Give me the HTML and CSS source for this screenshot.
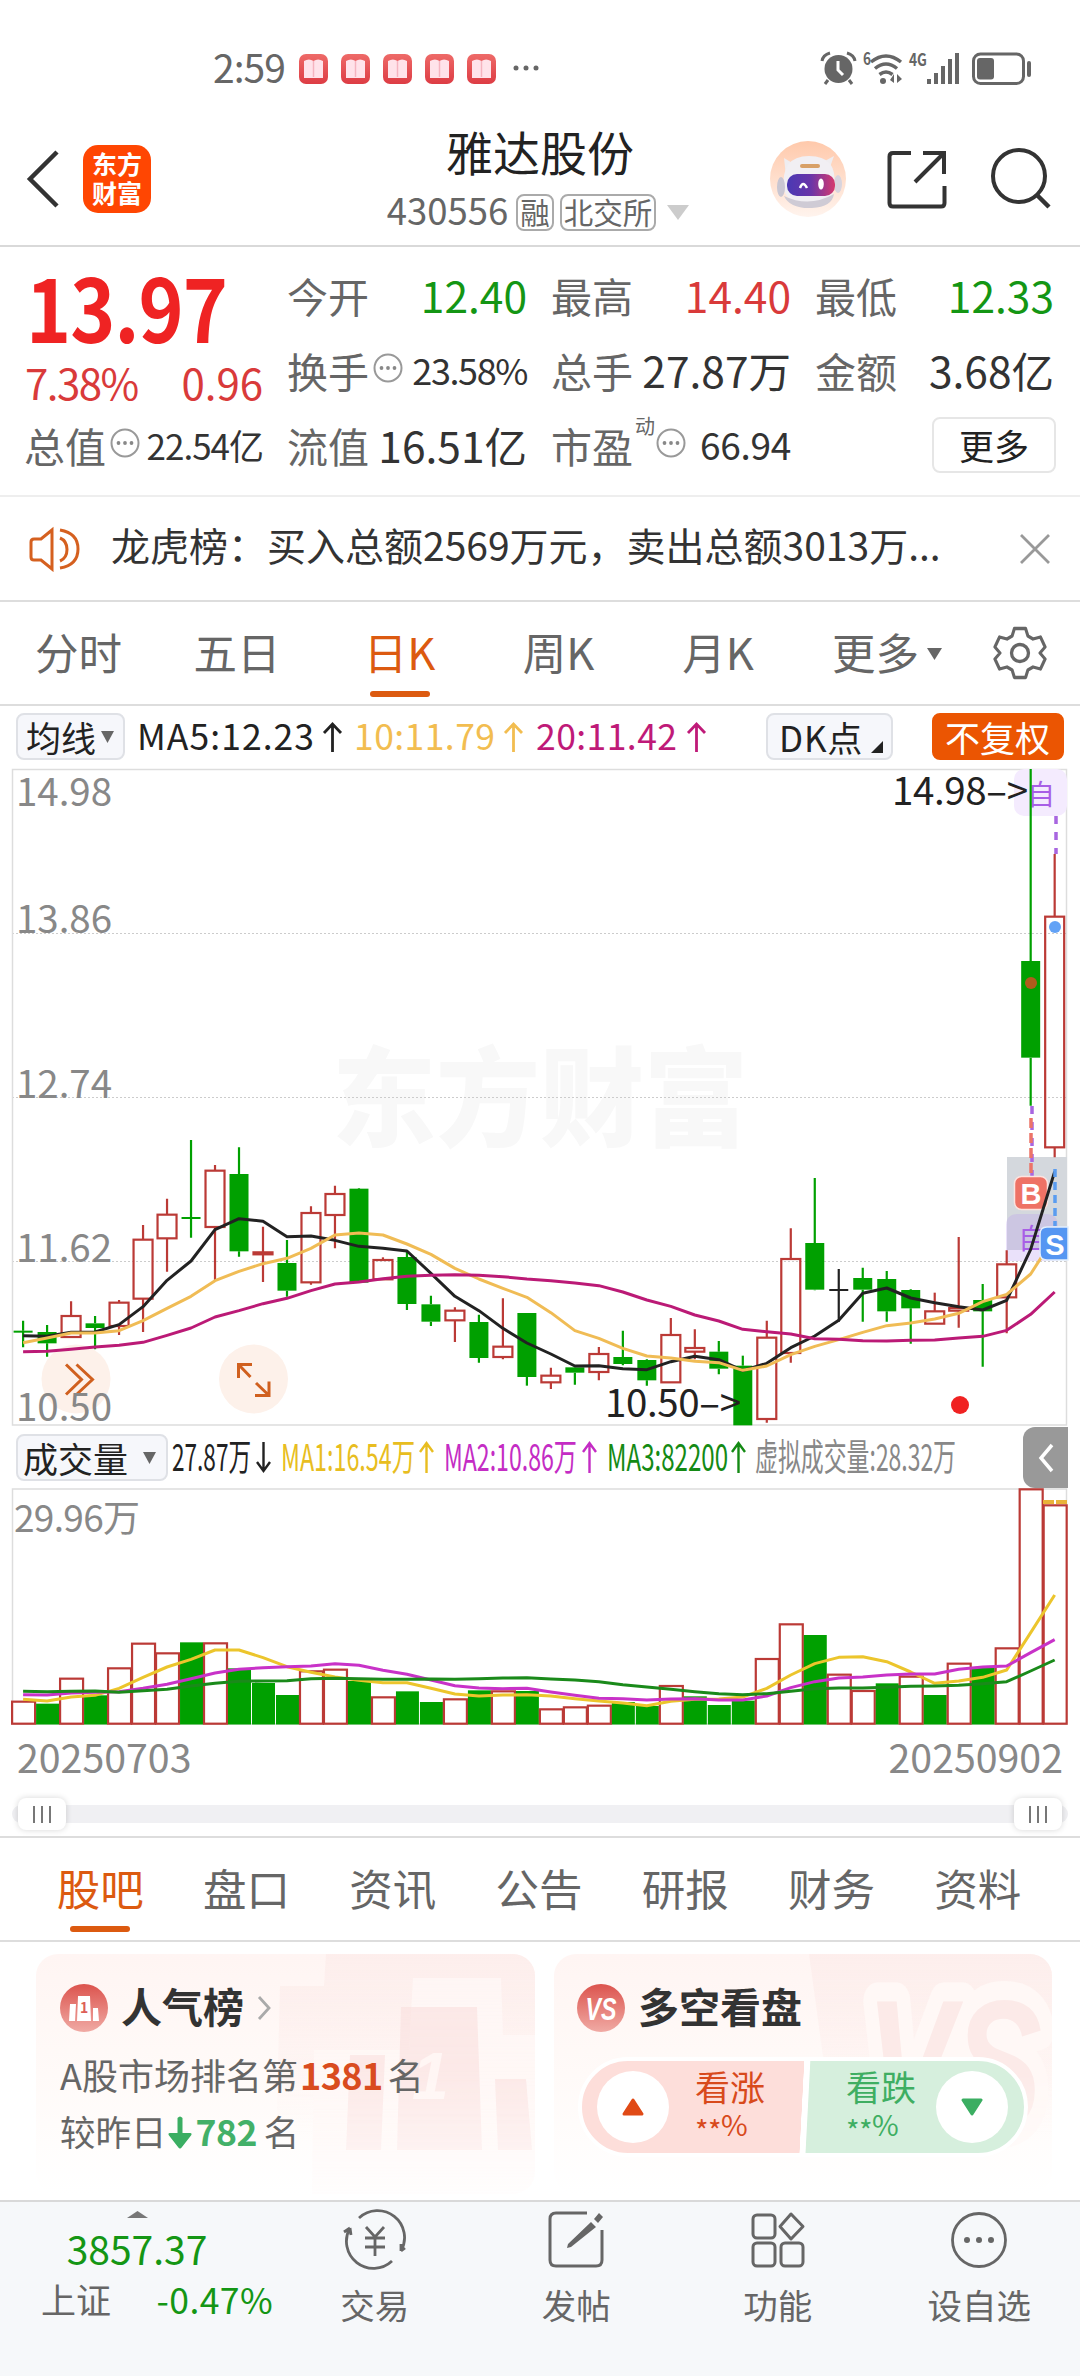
FILE: index.html
```html
<!DOCTYPE html>
<html lang="zh-CN">
<head>
<meta charset="utf-8">
<title>雅达股份 430556</title>
<link rel="stylesheet" href="styles.css">
</head>
<body>
<svg class="defs" width="0" height="0" aria-hidden="true">
  <defs>
    <linearGradient id="book" x1="0" y1="0" x2="0" y2="1"><stop offset="0" stop-color="#ee6a68"/><stop offset="1" stop-color="#dd3c44"/></linearGradient>
    <linearGradient id="halo" x1="0" y1="0" x2="0" y2="1"><stop offset="0" stop-color="#ffc9ab"/><stop offset="1" stop-color="#fff4ee"/></linearGradient>
    <linearGradient id="visor" x1="0" y1="0" x2="1" y2="0"><stop offset="0" stop-color="#4a39b4"/><stop offset=".5" stop-color="#6a35a8"/><stop offset="1" stop-color="#d63a6e"/></linearGradient>
    <linearGradient id="badge" x1="0" y1="0" x2="0" y2="1"><stop offset="0" stop-color="#dc544e"/><stop offset="1" stop-color="#f0aaa4"/></linearGradient>
    <linearGradient id="veil" x1="0" y1="0" x2="0" y2="1"><stop offset="0" stop-color="#fdeeec"/><stop offset=".75" stop-color="#fdeeec" stop-opacity="0"/></linearGradient>
    <symbol id="note" viewBox="0 0 29 30"><rect width="29" height="30" rx="7" fill="url(#book)"/><path d="M5 7q5-3 9.500 0q4.500-3 9.500 0V24h-19z" fill="#ffe3ea"/><path d="M14.500 7v16" stroke="#f5b4c0" stroke-width="1.500"/></symbol>
    <symbol id="more" viewBox="0 0 30 30"><circle cx="15" cy="15" r="13.500" fill="none" stroke="#999" stroke-width="2"/><g fill="#888"><circle cx="8.500" cy="15" r="1.900"/><circle cx="15" cy="15" r="1.900"/><circle cx="21.500" cy="15" r="1.900"/></g></symbol>
  </defs>
</svg>

<div class="status">
  <span class="clock">2:59</span>
  <div class="notes">
    <svg><use href="#note"/></svg><svg><use href="#note"/></svg><svg><use href="#note"/></svg><svg><use href="#note"/></svg><svg><use href="#note"/></svg>
  </div>
  <svg class="dots" viewBox="0 0 26 6"><g fill="#666"><circle cx="3" cy="3" r="2.500"/><circle cx="13" cy="3" r="2.500"/><circle cx="23" cy="3" r="2.500"/></g></svg>
  <svg class="signals" viewBox="820 50 214 38">
    <g fill="#666">
      <circle cx="838.500" cy="69" r="14"/>
      <path d="M822 61q1-6 8-8M855 61q-1-6-8-8M828 80l-3 4M849 80l3 4" fill="none" stroke="#666" stroke-width="3"/>
      <path d="M838 61v9l5 5" fill="none" stroke="#fff" stroke-width="3"/>
      <text class="tiny" x="863" y="65" textLength="8" lengthAdjust="spacingAndGlyphs">6</text>
      <path d="M871 62q15-12 30 0M875 68.500q11-9 22 0M879.500 74.500q6.500-5 13 0" fill="none" stroke="#666" stroke-width="3.500"/>
      <circle cx="883" cy="81" r="3"/>
      <path d="M890 80l4-6v9zM897 74v9l5-4z"/>
      <text class="tiny" x="909" y="66" textLength="18" lengthAdjust="spacingAndGlyphs">4G</text>
      <path d="M927 79h4v5h-4zM934 73h4v11h-4zM941 66h4v18h-4zM948 59h4v25h-4zM955 53h4v31h-4z"/>
      <rect x="973.500" y="54" width="50" height="29.500" rx="7" fill="none" stroke="#666" stroke-width="3"/>
      <rect x="977" y="58" width="17" height="21.500" rx="3"/>
      <rect x="1027" y="61" width="4" height="16" rx="2"/>
    </g>
  </svg>
</div>

<header class="head">
  <div class="head-left">
    <svg class="back" viewBox="0 0 34 58"><path d="M31 2L4 29l27 27" fill="none" stroke="#333" stroke-width="4.500"/></svg>
    <div class="logo"><span>东方</span><span>财富</span></div>
  </div>
  <div class="head-mid">
    <h1>雅达股份</h1>
    <div class="code"><span>430556</span><i>融</i><i>北交所</i><svg viewBox="0 0 22 15"><path d="M0 0h22L11 15z" fill="#ccc"/></svg></div>
  </div>
  <div class="head-right">
    <svg class="robot" viewBox="770 141 76 76">
      <circle cx="808" cy="179" r="38" fill="url(#halo)"/>
      <path d="M786 176l-2-18 10 6zM829 170l5-14-11 6z" fill="#efedf0"/>
      <path d="M784 190q-4-34 25-34t25 30q1 17-25 17-22 0-25-13z" fill="#f1eff3"/>
      <ellipse cx="781" cy="187" rx="4" ry="10" fill="#c9c6d2"/>
      <ellipse cx="838" cy="184" rx="4" ry="9" fill="#d8d4de"/>
      <path d="M784 196q25 12 50-2-2 13-22 14-22 1-28-12z" fill="#cfcbd5"/>
      <rect x="787" y="174" width="48" height="22" rx="10" fill="url(#visor)"/>
      <path d="M800 188q3-8 7 0" fill="none" stroke="#fff" stroke-width="2.500"/>
      <ellipse cx="821" cy="184" rx="2.800" ry="5.500" fill="#fff"/>
      <rect x="800" y="164" width="20" height="4" rx="2" fill="#d8a067"/>
    </svg>
    <svg class="share" viewBox="886 149 62 62"><path d="M911 153H893q-3.500 0-3.500 3.500V203q0 3.500 3.500 3.500h48q3.500 0 3.500-3.500V186M923 153h21v21M944 153l-29 29" fill="none" stroke="#333" stroke-width="4"/></svg>
    <svg class="find" viewBox="990 147 62 63"><circle cx="1019" cy="176" r="26" fill="none" stroke="#333" stroke-width="4"/><path d="M1037 195l12 12" stroke="#333" stroke-width="4.500"/></svg>
  </div>
</header>

<section class="quote">
  <div class="lead"><b>13.97</b><p><span>7.38%</span><span>0.96</span></p></div>
  <div class="cell"><span>今开</span><em class="g">12.40</em></div>
  <div class="cell"><span>最高</span><em class="r">14.40</em></div>
  <div class="cell"><span>最低</span><em class="g">12.33</em></div>
  <div class="cell"><span>换手</span><svg><use href="#more"/></svg><em class="s">23.58%</em></div>
  <div class="cell"><span>总手</span><em>27.87万</em></div>
  <div class="cell"><span>金额</span><em>3.68亿</em></div>
  <div class="cell"><span>总值</span><svg><use href="#more"/></svg><em class="s xs">22.54亿</em></div>
  <div class="cell"><span>流值</span><em>16.51亿</em></div>
  <div class="cell"><span>市盈</span><sup>动</sup><svg><use href="#more"/></svg><em class="s pe">66.94</em></div>
  <div class="cell last"><button>更多</button></div>
</section>

<section class="notice">
  <svg class="horn" viewBox="28 525 54 46"><g fill="none" stroke="#d5601f" stroke-width="3"><path d="M52 529v39l-11-9h-7q-3 0-3-3V541q0-3 3-3h7z"/><path d="M60 537q7 3 7 11.500T60 560M60 529q18 3 18 19T60 567"/></g></svg>
  <p>龙虎榜：买入总额2569万元，卖出总额3013万...</p>
  <svg class="close" viewBox="0 0 30 30"><path d="M1 1l28 28M29 1L1 29" stroke="#999" stroke-width="2.800"/></svg>
</section>

<nav class="periods">
  <a>分时</a><a>五日</a><a class="on">日K</a><a>周K</a><a>月K</a><a>更多<svg viewBox="0 0 15 12"><path d="M0 0h15L7.500 12z" fill="#666"/></svg></a>
  <svg class="gear" viewBox="-27 -27 54 54"><path d="M-6-24.500H6L8.500-17 14-14 22-16 27-6 21.500 0 27 6 22 16 14 14 8.500 17 6 24.500H-6L-8.500 17-14 14-22 16-27 6-21.500 0-27-6-22-16-14-14-8.500-17z" transform="scale(.93 1)" fill="none" stroke="#666" stroke-width="3.300" stroke-linejoin="round"/><circle r="8.500" fill="none" stroke="#666" stroke-width="3.300"/></svg>
</nav>

<div class="ma">
  <button class="pick">均线<svg viewBox="0 0 13 12"><path d="M0 0h13L6.500 12z" fill="#666"/></svg></button>
  <svg class="legend" viewBox="136 713 580 48">
    <g class="t35"><text x="137" y="750" fill="#222" textLength="177">MA5:12.23</text><text x="354" y="750" fill="#f2bd50" textLength="141">10:11.79</text><text x="536" y="750" fill="#bf1a78" textLength="141">20:11.42</text></g>
    <g fill="none" stroke-width="2.800"><path stroke="#222" d="M332.500 752V724M324 733l8.500-9 8.500 9"/><path stroke="#f2bd50" d="M513.500 752V724M505 733l8.500-9 8.500 9"/><path stroke="#bf1a78" d="M696.500 752V724M688 733l8.500-9 8.500 9"/></g>
  </svg>
  <button class="dk">DK点<svg viewBox="0 0 12 12"><path d="M12 0v12H0z" fill="#222"/></svg></button>
  <button class="adj">不复权</button>
</div>

<svg id="price" class="price" viewBox="0 768 1080 659">
  <text class="mark" x="332" y="1138" textLength="416" lengthAdjust="spacingAndGlyphs">东方财富</text>
  <g fill="none" stroke="#ccc" stroke-dasharray="2 2"><path d="M12 933.500H1067M12 1097.500H1067M12 1261.500H1067"/></g>
  <rect x="12.500" y="769.500" width="1054" height="655.500" fill="none" stroke="#ddd" stroke-width="1.500"/>
  <g fill="#fdf1ea"><circle cx="76" cy="1379" r="34.500"/><circle cx="253.500" cy="1379" r="34.500"/></g>
  <g fill="none" stroke="#d0601f" stroke-width="3"><path d="M66 1364.500l15.500 15L66 1394.500M76.500 1364.500l16 15-16 15"/><path d="M252 1364.500H238.500V1378M239 1365l11.500 12M255 1395.500H269V1381.500M268.500 1395L256 1383"/></g>
  <g class="t38" fill="#888"><text x="16" y="806" textLength="96">14.98</text><text x="16" y="933" textLength="96">13.86</text><text x="16" y="1098" textLength="96">12.74</text><text x="16" y="1262" textLength="96">11.62</text><text x="16" y="1421" textLength="96">10.50</text></g>
  <rect x="1007" y="1157" width="60" height="93" fill="#d4d8dd"/>
  <rect x="1014" y="769" width="53" height="47" rx="10" fill="#f4ebfe"/>
  <path d="M1006 1261v-35q0-12 12-12h28q12 0 12 12v35z" fill="#b99bf0" opacity=".3"/>
  <g class="self"><text x="1027" y="805">自</text><text x="1018" y="1249">自</text></g>
  <g fill="none" stroke-width="3.500"><path stroke="#a866e0" stroke-dasharray="8 8" d="M1056 816v38M1032 1106v70"/><path stroke="#ec7468" stroke-dasharray="10 5" d="M1031 1118v58"/></g>
  <g id="candles" stroke-width="2.200"></g>
  <circle cx="1031" cy="983" r="6" fill="#b05c1c"/><circle cx="1055" cy="927" r="6" fill="#62a2f6"/>
  <rect x="1014.500" y="1176.500" width="33" height="33" rx="7" fill="#ee7265" stroke="#fde3df" stroke-width="1.500"/>
  <text class="bs" x="1031" y="1204" text-anchor="middle">B</text>
  <g id="lines" fill="none" stroke-width="3" stroke-linejoin="round"></g>
  <path d="M1055 1169v57" stroke="#5a9cf0" stroke-width="3.500" stroke-dasharray="8 5"/>
  <path d="M1068 1227h-21q-7 0-7 7v19q0 7 7 7h21z" fill="#5596f2" stroke="#e2eefd" stroke-width="1.500"/>
  <text class="bs" x="1055" y="1255" text-anchor="middle">S</text>
  <g class="t38" fill="#222"><text x="892" y="804.500" textLength="136">14.98–&gt;</text><text x="605" y="1416.500" textLength="136">10.50–&gt;</text></g>
  <circle cx="960" cy="1405" r="9" fill="#f02222"/>
</svg>

<div class="volhead">
  <button class="pick wide">成交量<svg viewBox="0 0 13 12"><path d="M0 0h13L6.500 12z" fill="#666"/></svg></button>
  <svg class="vlegend" viewBox="170 1427 800 61">
    <g class="t37">
      <text x="172" y="1471" fill="#222" textLength="79" lengthAdjust="spacingAndGlyphs">27.87万</text>
      <text x="281" y="1471" fill="#e8bd20" textLength="134" lengthAdjust="spacingAndGlyphs">MA1:16.54万</text>
      <text x="444" y="1471" fill="#c42cc4" textLength="133" lengthAdjust="spacingAndGlyphs">MA2:10.86万</text>
      <text x="607" y="1471" fill="#148a14" textLength="121" lengthAdjust="spacingAndGlyphs">MA3:82200</text>
      <text x="755" y="1471" fill="#888" textLength="201" lengthAdjust="spacingAndGlyphs">虚拟成交量:28.32万</text>
    </g>
    <g fill="none" stroke-width="2.400"><path stroke="#222" d="M263.500 1442v29M257 1462l6.500 9 6.500-9"/><path stroke="#e8bd20" d="M426.500 1473v-30M420 1452l6.500-9 6.500 9"/><path stroke="#c42cc4" d="M589.500 1473v-30M583 1452l6.500-9 6.500 9"/><path stroke="#148a14" d="M738.500 1473v-30M732 1452l6.500-9 6.500 9"/></g>
  </svg>
  <div class="fold"><svg viewBox="0 0 16 30"><path d="M14 2L3 15l11 13" fill="none" stroke="#fff" stroke-width="3.500"/></svg></div>
</div>

<svg class="volume" viewBox="0 1488 1080 238">
  <rect x="12.500" y="1489" width="1054" height="235" fill="none" stroke="#ddd" stroke-width="1.500"/>
  <text class="t37" x="14" y="1532" fill="#888" textLength="126">29.96万</text>
  <g id="bars" stroke-width="2.200"></g>
  <path d="M1043 1502h24" stroke="#e9b33a" stroke-width="4" stroke-dasharray="11 2"/>
  <g id="vlines" fill="none" stroke-width="3" stroke-linejoin="round"></g>
</svg>
<div class="dates"><span>20250703</span><span>20250902</span></div>
<div class="slider"><i></i><i></i></div>

<nav class="tabs"><a class="on">股吧</a><a>盘口</a><a>资讯</a><a>公告</a><a>研报</a><a>财务</a><a>资料</a></nav>

<section class="cards">
  <article class="card rank">
    <svg class="decor" viewBox="36 1954 499 240">
      <path d="M326 1954h209v240H275L280 1986h44z" fill="url(#veil)"/>
      <path d="M414 1978h121v0h-34l2 57h32v160H312l2-145h95l4-72z" transform="translate(0 0)" fill="#fff8f6" opacity=".8"/>
      <path d="M401 2007h76l5 143h-85zM350 2055h35l-4 95h-35zM495 2079h31l6 71h-34z" fill="#fae0dd" opacity=".6"/>
      <text class="one" x="412" y="2099">1</text>
    </svg>
    <h2><svg viewBox="-24 -24 48 48"><circle r="24" fill="url(#badge)"/><path d="M-14-4h6l-1 17h-6zM-6-12H6L7 13H-7zM9 0h5l1 13H9z" fill="#fff"/><text class="first" x="0" y="5" text-anchor="middle">1</text></svg>人气榜<svg class="go" viewBox="0 0 14 24"><path d="M2 1l10 11L2 23" fill="none" stroke="#aaa" stroke-width="2.800"/></svg></h2>
    <p>A股市场排名第<b>1381</b>名</p>
    <p class="p2">较昨日<svg viewBox="0 0 24 34"><path d="M9.500 2q2.500-3 5 0v15H22q2.500 0 1 2.500L14 31q-2 3-4 0L1 19.500Q-.500 17 2 17h7.500z" fill="#3bae62"/></svg><b class="dn">782</b>名</p>
  </article>
  <article class="card vote">
    <svg class="decor" viewBox="554 1954 498 240">
      <path d="M809 1954h243v240H842z" fill="url(#veil)"/>
      <text class="ghost" x="866" y="2128" textLength="176" lengthAdjust="spacingAndGlyphs">VS</text>
    </svg>
    <h2><svg viewBox="-24 -24 48 48"><circle r="24" fill="url(#badge)"/><text class="vs" x="0" y="12" text-anchor="middle" textLength="31" lengthAdjust="spacingAndGlyphs">VS</text></svg>多空看盘</h2>
    <div class="pill">
      <div class="up"><span class="knob"><svg viewBox="0 0 24 18"><path d="M12 2L21 16H3z" fill="#e04a16" stroke="#e04a16" stroke-width="3" stroke-linejoin="round"/></svg></span><span class="lab">看涨<small><u>**</u>%</small></span></div>
      <div class="down"><span class="lab">看跌<small><u>**</u>%</small></span><span class="knob"><svg viewBox="0 0 24 18"><path d="M12 16L21 2H3z" fill="#3bae62" stroke="#3bae62" stroke-width="3" stroke-linejoin="round"/></svg></span></div>
    </div>
  </article>
</section>

<footer class="bar">
  <div class="index">
    <svg viewBox="0 0 21 7"><path d="M10.500 0L21 7H0z" fill="#777"/></svg>
    <b>3857.37</b>
    <p><span>上证</span><em>-0.47%</em></p>
  </div>
  <a><svg viewBox="-32 -32 64 64"><g fill="none" stroke="#666" stroke-width="2.800"><path d="M-16-22A27 27 0 0 1 26 11M26 11l4-3M26 11V4M17 21A27 27 0 0 1-25-12M-25-12l-6 4M-25-12l1 7"/><path d="M-9-13L0-3 9-13M0-3V16M-10-2H10M-10 7H10"/></g></svg>交易</a>
  <a><svg viewBox="-32 -32 64 64"><path d="M11-27H-20q-6 0-6 6V20q0 6 6 6H20q6 0 6-6V-10" fill="none" stroke="#666" stroke-width="3"/><path d="M15-18l5 5L-5 7l-4 1 1-4zM18-21l5-6 4 4-5 6z" fill="#666"/></svg>发帖</a>
  <a><svg viewBox="-32 -32 64 64"><g fill="none" stroke="#666" stroke-width="3" stroke-linejoin="round"><rect x="-25" y="-25" width="22" height="23" rx="4"/><rect x="-25" y="3" width="22" height="23" rx="4"/><rect x="3" y="3" width="22" height="23" rx="4"/><path d="M13-26L25-13.500 13-1 2-13.500z"/></g></svg>功能</a>
  <a><svg viewBox="-32 -32 64 64"><circle r="26.500" fill="none" stroke="#666" stroke-width="2.800"/><g fill="#666"><circle cx="-12" r="3"/><circle r="3"/><circle cx="12" r="3"/></g></svg>设自选</a>
</footer>
<script src="chart.js"></script>
</body>
</html>
```
FILE: styles.css
```css
* { box-sizing: border-box; }
body { margin: 0; width: 1080px; height: 2376px; overflow: hidden; background: #fff; color: #666; font-family: "Noto Sans CJK SC", sans-serif; display: flex; flex-direction: column; }
body > * { flex: none; }
h1, h2, p { margin: 0; font-weight: 400; }
em, i { font-style: normal; }
u { text-decoration: none; }
svg { display: block; flex: none; }
button { font: inherit; margin: 0; padding: 0; cursor: pointer; }
.defs { position: absolute; }

.status { height: 110px; padding: 27px 49px 0 213px; display: flex; align-items: flex-start; }
.clock { width: 86px; font-size: 39px; line-height: 78px; letter-spacing: -1px; height: 78px; }
.notes { display: flex; gap: 13px; margin-top: 27px; }
.notes svg { width: 29px; height: 30px; }
.dots { width: 26px; height: 6px; margin: 38px 0 0 17px; }
.signals { width: 214px; height: 38px; margin: 23px -3px 0 auto; overflow: visible; }
.tiny { font-size: 17px; font-weight: 700; }

.head { height: 137px; border-bottom: 2px solid #d9d9d9; display: grid; grid-template-columns: 300px 470px 310px; }
.head-left { display: flex; gap: 23px; padding: 35px 0 0 26px; }
.back { width: 34px; height: 58px; margin-top: 5px; }
.logo { width: 68px; height: 68px; border-radius: 15px; background: #ff4602; color: #fff; font-weight: 700; font-size: 25px; line-height: 29px; display: flex; flex-direction: column; align-items: center; justify-content: center; padding-bottom: 2px; }
.head-mid { text-align: center; margin-left: 10px; }
h1 { font-size: 47px; line-height: 60px; margin-top: 11px; color: #222; }
.code { display: flex; justify-content: center; align-items: center; height: 50px; font-size: 36.500px; line-height: 50px; margin: 6px 0 0; width: 456px; gap: 6px; }
.code span { margin-right: 2px; position: relative; top: -2px; }
.code i { border: 2px solid #aaa; border-radius: 8px; height: 37px; line-height: 31px; font-size: 29.500px; padding: 0 2px; }
.code svg { width: 22px; height: 15px; margin-left: 5px; }
.head-right { display: flex; padding-top: 31px; }
.robot { width: 76px; height: 76px; }
.share { width: 62px; height: 62px; margin: 8px 0 0 40px; }
.find { width: 62px; height: 63px; margin: 6px 0 0 42px; }

.quote { height: 250px; padding: 11px 0 0 26px; border-bottom: 2px solid #eee; display: grid; grid-template-columns: 237px 238px 238px 237px; grid-template-rows: 75px 75px 75px; column-gap: 26px; }
.lead { grid-row: 1 / 3; color: #d93a3a; }
.lead b { display: block; height: 92px; line-height: 94px; font-size: 87px; color: #ef2323; transform: scaleX(.88); transform-origin: 0 0; letter-spacing: -1px; }
.lead p { display: flex; justify-content: space-between; font-size: 42px; line-height: 64px; margin-left: -1px; }
.lead p span:first-child { letter-spacing: -1.500px; }
.cell { display: flex; align-items: center; line-height: 75px; font-size: 41px; height: 75px; white-space: nowrap; }
.cell span { margin-left: -2px; margin-right: 2px; }
.cell em { margin-left: auto; color: #333; font-size: 42.500px; margin-top: -2px; }
.cell em.g { color: #149614; }
.cell em.r { color: #d93a3a; }
.cell em.s { font-size: 36px; letter-spacing: -1.400px; }
.cell em.xs { font-size: 35px; letter-spacing: -1px; }
.cell em.pe { font-size: 37px; letter-spacing: -.300px; }
.cell svg { width: 30px; height: 30px; margin: 0 0 6px 2px; }
.cell sup { font-size: 20px; line-height: 20px; align-self: flex-start; margin: 8px -17px 0 0; }
.cell sup + svg { margin-left: 18px; }
.cell.last { justify-content: flex-end; }
.cell button { width: 124px; height: 56px; margin: 0 -2px 2px 0; border: 2px solid #e6e6e6; border-radius: 8px; background: #fff; color: #222; font-size: 35px; line-height: 48px; }

.notice { height: 105px; border-bottom: 2px solid #ddd; display: flex; align-items: center; padding-left: 28px; }
.horn { width: 54px; height: 46px; }
.notice p { font-size: 39px; line-height: 60px; color: #333; margin: -9px 0 0 29px; width: 832px; white-space: nowrap; }
.close { width: 30px; height: 30px; margin-left: 77px; }

.periods { height: 104px; border-bottom: 2px solid #ddd; display: grid; grid-template-columns: 157px 160px 165px 153px 166px 172px 100px; font-size: 43.500px; line-height: 99px; }
.periods a { text-align: center; position: relative; }
.periods .on, .tabs .on { color: #dc5a10; }
.periods .on::after, .tabs .on::after { content: ""; display: block; width: 60px; height: 6px; border-radius: 3px; background: #dc5a10; margin: -10px auto 0; }
.periods a svg { display: inline-block; width: 15px; height: 12px; margin-left: 8px; vertical-align: 10px; }
.gear { width: 54px; height: 54px; margin: 24px 0 0 20px; }

.ma { height: 62px; display: flex; padding: 7px 0 0 16px; color: #222; }
.ma button, .pick { height: 47px; border: 2px solid #dfe1e6; border-radius: 8px; background: #f6f7fb; color: #222; font-size: 35px; line-height: 39px; display: flex; align-items: center; white-space: nowrap; }
.pick { width: 109px; padding-left: 8px; }
.pick svg { width: 13px; height: 12px; margin-left: 5px; }
.pick.wide { width: 152px; padding-left: 5px; }
.pick.wide svg { margin-left: 15px; }
.legend { width: 580px; height: 48px; margin-left: 11px; }
.ma .dk { width: 127px; margin-left: 50px; padding-left: 11px; letter-spacing: .800px; }
.dk svg { width: 12px; height: 12px; margin: 20px 0 0 8px; }
.ma .adj { width: 132px; margin-left: 39px; background: #eb5502; border-color: #eb5502; color: #fff; padding-left: 11px; }

.t35 { font-size: 35.500px; }
.t37 { font-size: 37px; }
.t38 { font-size: 38.500px; }
.price { width: 1080px; height: 659px; }
.mark { font-size: 108px; font-weight: 900; fill: #f8f8f8; }
.self { font-size: 28px; fill: #a85fe6; }
.bs { font-family: "Liberation Sans", sans-serif; font-size: 29px; font-weight: 700; fill: #fff; }

.volhead { height: 61px; display: flex; padding: 7px 0 0 16px; }
.vlegend { width: 800px; height: 61px; margin: -7px 0 0 2px; }
.fold { width: 45px; height: 61px; margin: -7px 0 0 53px; background: #999; border-radius: 12px 0 0 12px; padding: 16px 0 0 15px; }
.fold svg { width: 16px; height: 30px; }
.volume { width: 1080px; height: 238px; }

.dates { height: 70px; padding: 0 17px; display: flex; justify-content: space-between; font-size: 39.300px; line-height: 60px; color: #888; }
.slider { height: 18px; margin: 9px 12px 13px; border-radius: 9px; background: #f0f0f3; display: flex; justify-content: space-between; align-items: center; padding: 0 6px; }
.slider i { width: 48px; height: 32px; border-radius: 8px; background: linear-gradient(90deg, #777 2px, transparent 2px 8px, #777 8px 10px, transparent 10px 16px, #777 16px) center / 18px 17px no-repeat, #fff; box-shadow: 0 0 6px rgba(0, 0, 0, .16); }

.tabs { height: 106px; border-top: 2px solid #ddd; border-bottom: 2px solid #ddd; padding: 0 29px 0 27px; display: grid; grid-template-columns: repeat(7, 1fr); text-align: center; font-size: 43.500px; line-height: 100px; }
.tabs .on::after { margin-top: -12px; }

.cards { height: 258px; display: grid; grid-template-columns: 499px 498px; gap: 19px; padding: 12px 0 0 36px; }
.card { position: relative; height: 240px; border-radius: 22px; background: linear-gradient(#fff5f3, #fffaf8 50%, #fff); padding: 25px 0 0 24px; overflow: hidden; }
.decor { position: absolute; left: 0; top: 0; width: 100%; height: 240px; -webkit-mask-image: linear-gradient(#000, #000 50%, rgba(0, 0, 0, .25)); mask-image: linear-gradient(#000, #000 50%, rgba(0, 0, 0, .25)); }
.ghost { font-family: "Liberation Sans", sans-serif; font-size: 184px; font-weight: 700; font-style: italic; fill: #fceae8; stroke: #fff8f6; stroke-width: 38px; stroke-linejoin: round; paint-order: stroke; }
.one { font-family: "Liberation Sans", sans-serif; font-size: 66px; font-weight: 700; font-style: italic; fill: #fff6f4; }
.first { font-size: 14px; font-weight: 700; fill: #dd5f58; }
.card h2 { position: relative; display: flex; align-items: center; font-size: 41px; font-weight: 700; line-height: 52px; height: 52px; color: #333; gap: 13px; }
.card h2 svg { width: 48px; height: 48px; margin-top: 5px; }
.card h2 .go { width: 14px; height: 24px; }
.vote { padding-left: 23px; }
.vs { font-family: "Liberation Sans", sans-serif; font-size: 32px; font-weight: 700; font-style: italic; fill: #fff; }
.card p { position: relative; display: flex; align-items: center; font-size: 36px; line-height: 56px; height: 56px; margin-top: 15px; }
.card p.p2 { margin-top: 1px; font-size: 35.500px; }
.card p b { color: #d94c1f; margin: 0 5px 0 2px; letter-spacing: -.500px; }
.card p b.dn { color: #43b068; margin: 0 7px 0 4px; }
.card p svg { width: 24px; height: 34px; margin: 4px 0 0 1px; }
.pill { position: relative; width: 450px; height: 100px; margin: 26px 0 0 1px; border: 4px solid #fff; border-radius: 50px; overflow: hidden; display: grid; grid-template-columns: 220px 222px; background: linear-gradient(93deg, #fddeda 49.700%, #fff 49.800% 51%, #d6efdd 51.200%); }
.up, .down { display: flex; align-items: center; }
.up { padding-left: 15px; color: #d84a1c; gap: 26px; }
.down { padding-left: 44px; color: #3fae62; gap: 20px; }
.knob { width: 72px; height: 72px; border-radius: 50%; background: #fff; display: grid; place-items: center; }
.knob svg { width: 24px; height: 18px; }
.lab { font-size: 35px; line-height: 40px; margin-top: -9px; }
.lab small { display: block; font-size: 29px; line-height: 34px; letter-spacing: -.500px; }
.lab u { position: relative; top: 6px; }

.bar { height: 177px; background: #f6f8fa; border-top: 2px solid #d9d9d9; display: grid; grid-template-columns: 274px repeat(4, 201.500px); }
.bar a { text-align: center; font-size: 34.500px; line-height: 50px; }
.bar a svg { width: 64px; height: 64px; margin: 6px auto 7px; }
.index { display: flex; flex-direction: column; align-items: center; color: #149614; }
.index svg { width: 21px; height: 7px; margin: 9px 0 0; }
.index b { font-weight: 400; font-size: 39px; line-height: 56px; margin-top: 2px; }
.index p { display: flex; justify-content: space-between; width: 274px; padding: 0 1px 0 41px; font-size: 35px; line-height: 56px; margin-top: -5px; }
.index p span { color: #666; }
.index em { font-size: 35.500px; letter-spacing: .400px; }
```
FILE: chart.js
```js
// Each candle: colour key, high, body top, body bottom, low.
// Values are thirds of a pixel below y = 1080.
const candles = `g 722 752 755 802|g 735 756 790 830|r 664 708 771 773|g 708 730 744 808|r 660 668 738 765|r 435 479 656 756|r 356 404 475 575|g 180 411 415 473|r 255 272 441 600|g 202 282 514 530|r 440 517 523 606|g 480 549 632 650|r 379 399 607 614|r 317 342 405 505|g 324 326 608 608|r 532 540 598 598|g 515 531 672 690|g 647 673 725 738|r 682 692 721 786|g 704 726 834 848|r 655 800 831 838|g 699 699 891 917|r 863 887 907 927|g 860 862 878 914|r 801 822 876 901|g 752 831 852 856|g 838 840 901 917|r 714 765 907 907|r 748 804 815 838|g 783 815 866 883|g 827 857 1036 1036|r 722 773 1017 1028|r 445 537 819 848|g 294 489 629 631|k 567 627 631 725|g 563 594 629 725|g 573 597 694 725|g 628 630 685 791|r 638 694 731 731|r 471 684 692 743|g 612 660 694 860|r 511 553 652 760|g -933 -357 -67 77|r -678 -490 202 232`
  .split('|').map(s => s.split(' '));

const ma = {
  '#222': [767,769,757,756,734,680,601,543,449,416,424,470,468,481,499,505,513,580,649,692,745,789,822,858,857,866,869,845,829,839,872,850,803,768,721,640,624,654,668,680,690,661,508,275],
  '#f0bc55': [788,774,759,759,752,722,685,649,602,574,551,535,505,465,459,465,492,523,565,597,625,652,698,752,775,805,828,834,844,848,871,858,824,799,779,757,737,729,717,700,665,643,582,470],
  '#bb1a76': [815,814,808,801,796,787,766,744,711,692,671,655,632,612,606,596,589,586,584,586,590,597,602,609,617,636,660,679,705,723,748,755,762,776,778,782,783,781,780,774,769,751,703,636]
};

// Bar tops and averages, in thirds of a pixel below y = 1420.
const tops = [845,851,776,826,745,671,700,667,670,745,789,825,754,749,783,832,814,846,838,811,814,813,868,862,857,846,858,798,829,855,842,717,613,645,764,813,790,770,825,731,743,685,208,256];
const volRed = [0,2,4,5,6,8,12,13,15,18,20,22,23,24,27,31,32,34,35,37,39,41,42,43];
const vma = {
  '#ecc52c': [838,843,831,826,805,772,741,718,690,690,713,740,757,771,781,788,788,805,822,828,825,824,828,836,843,849,857,844,838,837,831,805,765,731,712,710,725,756,790,783,772,750,638,525],
  '#c832c8': [824,825,819,817,815,805,793,776,759,748,743,740,738,731,736,751,763,780,797,804,806,805,816,826,835,836,840,837,836,840,840,828,803,785,774,771,765,762,762,748,741,738,698,659],
  '#1a8a1a': [814,815,814,813,817,812,808,798,790,784,783,782,776,775,776,778,778,777,778,776,774,773,777,780,785,794,801,808,815,821,824,821,814,806,804,804,802,799,798,796,791,785,753,720]
};

const colour = { g: '#00a000', r: '#bb3a36', k: '#222' };
const x = i => 23.1 + i * 23.99;

function add(id, tag, attrs) {
  const node = document.createElementNS('http://www.w3.org/2000/svg', tag);
  for (const key in attrs) node.setAttribute(key, attrs[key]);
  document.getElementById(id).appendChild(node);
}

candles.forEach(([kind, ...v], i) => {
  const [high, top, bottom, low] = v.map(n => 1080 + n / 3);
  const c = colour[kind];
  add('candles', 'path', { d: `M${x(i)} ${high}V${top}M${x(i)} ${bottom}V${low}`, stroke: c });
  if (kind === 'r') add('candles', 'rect', { x: x(i) - 9.5, y: top, width: 19, height: bottom - top, fill: 'none', stroke: c });
  else add('candles', 'rect', { x: x(i) - 9.5, y: top, width: 19, height: Math.max(bottom - top, 2), fill: c });
});

tops.forEach((t, i) => {
  const y = 1420 + t / 3;
  if (volRed.includes(i)) add('bars', 'rect', { x: x(i) - 11, y, width: 23, height: 1723.7 - y, fill: '#fff', stroke: colour.r });
  else add('bars', 'rect', { x: x(i) - 11, y, width: 23, height: 1724.5 - y, fill: colour.g });
});

function lines(id, set, base) {
  for (const stroke in set) {
    add(id, 'polyline', { stroke, points: set[stroke].map((n, i) => `${x(i)},${base + n / 3}`).join(' ') });
  }
}
lines('lines', ma, 1080);
lines('vlines', vma, 1420);
```
